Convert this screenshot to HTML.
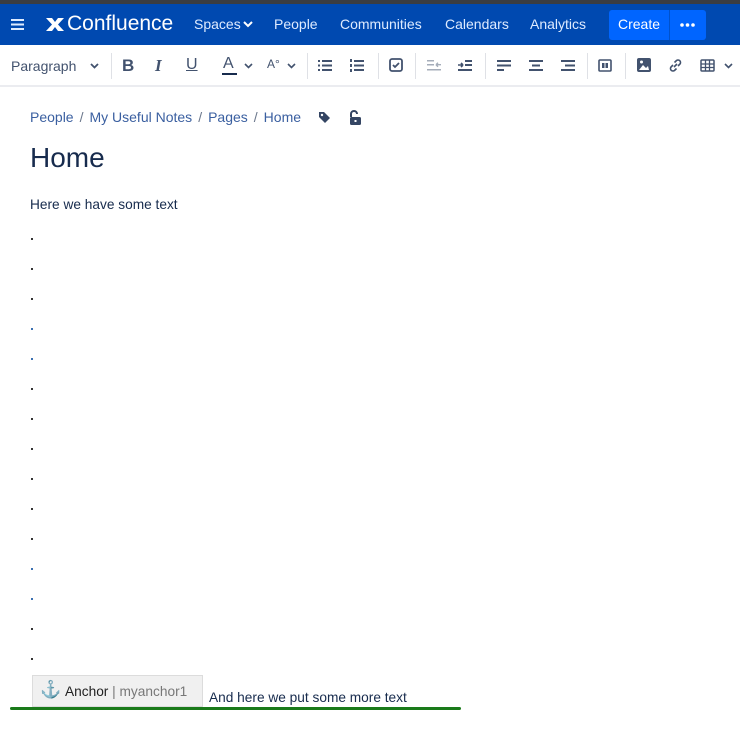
<!DOCTYPE html>
<html><head><meta charset="utf-8"><style>
*{margin:0;padding:0;box-sizing:border-box}
body{width:740px;height:735px;overflow:hidden;background:#fff;font-family:"Liberation Sans",sans-serif;position:relative;color:#172b4d}
.top{position:absolute;left:0;top:0;width:740px;height:4px;background:#3a3d42}
.hdr{position:absolute;left:0;top:4px;width:740px;height:41px;background:#0049b0;color:#fff}
.hdr span{position:absolute;top:12px;font-size:14px;color:#deebff}
.tb{position:absolute;left:0;top:45px;width:740px;height:42px;border-bottom:2px solid #ebecf0;color:#42526e}
.tb .t{position:absolute;top:13px;font-size:14px}
.sep{position:absolute;top:8px;width:1px;height:26px;background:#dfe1e6}
.ic{position:absolute;top:13px}
.bc{position:absolute;top:109px;left:30px;font-size:14px;color:#3a5fa0}
.bc i{font-style:normal;color:#6b778c;margin:0 6px}
h1{position:absolute;top:142px;left:30px;font-size:28px;font-weight:normal;color:#172b4d}
.p{position:absolute;left:30px;font-size:13.7px;color:#172b4d}
.dot{position:absolute;left:31px;width:2px;height:2px;background:#333}
</style></head><body>
<div class="top"></div>
<div class="hdr">
<svg style="position:absolute;left:11px;top:15px" width="13" height="11"><rect y="0" width="13" height="2" fill="#deebff"/><rect y="4.5" width="13" height="2" fill="#deebff"/><rect y="9" width="13" height="2" fill="#deebff"/></svg>
<svg style="position:absolute;left:45px;top:12px" width="20" height="17" viewBox="0 0 20 17"><path d="M1 2 L7 2 L10 6 L13 2 L19 2 L13 8.5 L19 15 L13 15 L10 11 L7 15 L1 15 L7 8.5Z" fill="#fff"/></svg>
<div style="position:absolute;left:67px;top:8px;font-size:21px;color:#fff">Confluence</div>
<span style="left:194px">Spaces</span>
<svg style="position:absolute;left:243px;top:17px" width="10" height="7"><path d="M1 1 L5 5 L9 1" stroke="#fff" stroke-width="2" fill="none"/></svg>
<span style="left:274px">People</span>
<span style="left:340px">Communities</span>
<span style="left:445px">Calendars</span>
<span style="left:530px">Analytics</span>
<div style="position:absolute;left:609px;top:6px;width:97px;height:30px;background:#0065ff;border-radius:3px"></div>
<div style="position:absolute;left:669px;top:6px;width:1px;height:30px;background:#0052cc"></div>
<span style="left:618px;color:#fff">Create</span>
<svg style="position:absolute;left:680px;top:19px" width="15" height="4"><circle cx="2" cy="2" r="1.8" fill="#fff"/><circle cx="7.5" cy="2" r="1.8" fill="#fff"/><circle cx="13" cy="2" r="1.8" fill="#fff"/></svg>
</div>
<div class="tb">
<div class="t" style="left:11px;top:13px;font-size:14px">Paragraph</div>
<svg class="ic" style="left:90px;top:18px" width="9" height="6"><path d="M1 1L4.5 4.5L8 1" stroke="#42526e" stroke-width="1.8" fill="none"/></svg>
<div class="sep" style="left:111px"></div>
<div class="t" style="left:122px;font-weight:bold;font-size:17px;top:11px">B</div>
<div class="t" style="left:155px;font-style:italic;font-size:17px;top:11px;font-family:'Liberation Serif',serif;font-weight:bold">I</div>
<div class="t" style="left:186px;font-size:16px;top:11px;text-decoration:underline">U</div>
<div class="t" style="left:223px;font-size:16px;top:10px">A</div>
<div style="position:absolute;left:222px;top:28px;width:15px;height:2px;background:#172b4d"></div>
<svg class="ic" style="left:244px;top:18px" width="9" height="6"><path d="M1 1L4.5 4.5L8 1" stroke="#42526e" stroke-width="1.6" fill="none"/></svg>
<div class="t" style="left:267px;font-size:12px;top:12px">A°</div>
<svg class="ic" style="left:287px;top:18px" width="9" height="6"><path d="M1 1L4.5 4.5L8 1" stroke="#42526e" stroke-width="1.6" fill="none"/></svg>
<div class="sep" style="left:307px"></div>
<svg class="ic" style="left:318px;top:14px" width="15" height="13"><g fill="#42526e"><rect x="0" y="1" width="2" height="2"/><rect x="0" y="5.5" width="2" height="2"/><rect x="0" y="10" width="2" height="2"/><rect x="4" y="1" width="10" height="2"/><rect x="4" y="5.5" width="10" height="2"/><rect x="4" y="10" width="10" height="2"/></g></svg>
<svg class="ic" style="left:350px;top:14px" width="15" height="13"><g fill="#42526e"><rect x="0" y="0" width="2" height="3"/><rect x="0" y="5" width="2" height="3"/><rect x="0" y="10" width="2" height="3"/><rect x="4" y="1" width="10" height="2"/><rect x="4" y="5.5" width="10" height="2"/><rect x="4" y="10" width="10" height="2"/></g></svg>
<div class="sep" style="left:378px"></div>
<svg class="ic" style="left:389px;top:13px" width="14" height="14"><rect x="1" y="1" width="12" height="12" rx="2" stroke="#42526e" stroke-width="1.8" fill="none"/><path d="M4 7L6 9L10 5" stroke="#42526e" stroke-width="1.8" fill="none"/></svg>
<div class="sep" style="left:415px"></div>
<svg class="ic" style="left:427px;top:14px" width="15" height="12"><g fill="#a5adba"><rect x="0" y="1" width="7" height="1.5"/><rect x="0" y="5" width="7" height="1.5"/><rect x="0" y="10" width="14" height="1.5"/><path d="M9 5.7L14 5.7M9 5.7L11 3.7M9 5.7L11 7.7" stroke="#a5adba" stroke-width="1.4"/></g></svg>
<svg class="ic" style="left:458px;top:14px" width="15" height="12"><g fill="#42526e"><rect x="7" y="1" width="7" height="2"/><rect x="7" y="5" width="7" height="2"/><rect x="0" y="10" width="14" height="2"/><path d="M0 6L5 6M5 6L3 4M5 6L3 8" stroke="#42526e" stroke-width="1.6"/></g></svg>
<div class="sep" style="left:485px"></div>
<svg class="ic" style="left:497px;top:15px" width="15" height="11"><g fill="#42526e"><rect y="0" width="14" height="2"/><rect y="4.5" width="14" height="2"/><rect y="9" width="7" height="2"/></g></svg>
<svg class="ic" style="left:529px;top:15px" width="15" height="11"><g fill="#42526e"><rect y="0" width="14" height="2"/><rect x="3" y="4.5" width="8" height="2"/><rect y="9" width="14" height="2"/></g></svg>
<svg class="ic" style="left:561px;top:15px" width="15" height="11"><g fill="#42526e"><rect y="0" width="14" height="2"/><rect x="4" y="4.5" width="10" height="2"/><rect y="9" width="14" height="2"/></g></svg>
<div class="sep" style="left:587px"></div>
<svg class="ic" style="left:598px;top:14px" width="14" height="13"><rect x="1" y="1" width="12" height="11" rx="1" stroke="#42526e" stroke-width="1.6" fill="none"/><rect x="4" y="4" width="2.5" height="5" fill="#42526e"/><rect x="7.5" y="4" width="2.5" height="5" fill="#42526e"/></svg>
<div class="sep" style="left:625px"></div>
<svg class="ic" style="left:637px;top:13px" width="14" height="14"><rect x="0" y="0" width="14" height="14" rx="2" fill="#42526e"/><path d="M2 12L6 7L9 10L11 8L12 12Z" fill="#fff"/><circle cx="4.5" cy="4" r="1.5" fill="#fff"/></svg>
<svg class="ic" style="left:668px;top:13px" width="15" height="15"><path d="M6 9L9 6M5 7L3 9A2.5 2.5 0 0 0 6.5 12.5L8.5 10.5M10 8L12 6A2.5 2.5 0 0 0 8.5 2.5L6.5 4.5" stroke="#42526e" stroke-width="1.6" fill="none"/></svg>
<svg class="ic" style="left:700px;top:14px" width="15" height="13"><rect x="1" y="1" width="13" height="11" rx="1" stroke="#42526e" stroke-width="1.5" fill="none"/><path d="M1 5H14M1 8.5H14M5.5 1V12M9.5 1V12" stroke="#42526e" stroke-width="1.3"/></svg>
<svg class="ic" style="left:724px;top:18px" width="9" height="6"><path d="M1 1L4.5 4.5L8 1" stroke="#42526e" stroke-width="1.6" fill="none"/></svg>
</div>
<div class="bc">People<i>/</i>My Useful Notes<i>/</i>Pages<i>/</i>Home</div>
<svg style="position:absolute;left:318px;top:111px" width="13" height="13"><path d="M1 1H6L12 7L7 12L1 6Z" fill="#344563"/><circle cx="4" cy="4" r="1.2" fill="#fff"/></svg>
<svg style="position:absolute;left:348px;top:110px" width="14" height="16"><path d="M3 7V4A3 3 0 0 1 9 4" stroke="#344563" stroke-width="2" fill="none"/><rect x="2" y="7" width="11" height="8" rx="1.5" fill="#344563"/><rect x="6.5" y="10" width="2" height="2" fill="#fff"/></svg>
<h1>Home</h1>
<div class="p" style="top:197px">Here we have some text</div>
<div class="dot" style="top:238px"></div><div class="dot" style="top:268px"></div><div class="dot" style="top:298px"></div><div class="dot" style="top:328px;background:#3a6fb0"></div><div class="dot" style="top:358px;background:#3a6fb0"></div><div class="dot" style="top:388px"></div><div class="dot" style="top:418px"></div><div class="dot" style="top:448px"></div><div class="dot" style="top:478px"></div><div class="dot" style="top:508px"></div><div class="dot" style="top:538px"></div><div class="dot" style="top:568px;background:#3a6fb0"></div><div class="dot" style="top:598px;background:#3a6fb0"></div><div class="dot" style="top:628px"></div><div class="dot" style="top:658px"></div>
<div style="position:absolute;left:32px;top:675px;width:171px;height:32px;background:#f0f0f0;border:1px solid #dcdcdc"></div>
<div style="position:absolute;left:40px;top:680px;font-size:17px;color:#a0a0a0">⚓</div>
<div style="position:absolute;left:65px;top:684px;font-size:13.7px;color:#222">Anchor <span style="color:#777">| myanchor1</span></div>
<div class="p" style="left:209px;top:690px">And here we put some more text</div>
<div style="position:absolute;left:10px;top:707px;width:451px;height:3px;background:#1a7a1a;border-radius:2px"></div>
</body></html>
